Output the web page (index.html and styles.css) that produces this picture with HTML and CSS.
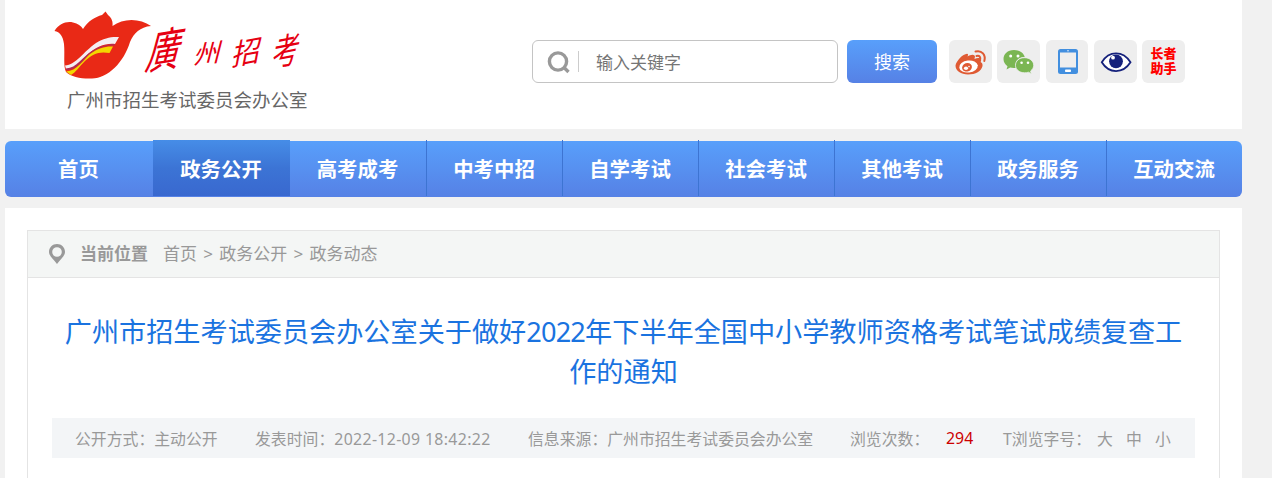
FILE: index.html
```html
<!DOCTYPE html>
<html lang="zh-CN">

<head>
  <meta charset="UTF-8">
  <meta name="viewport" content="width=device-width, initial-scale=1.0">
  <title>广州市招生考试委员会办公室</title>
  <link rel="stylesheet" href="styles.css">
</head>

<body>
  <div class="wrap">
    <div class="header">
      <a class="logo">
        <svg width="270" height="84" viewBox="50 0 270 84">
          <path fill="#e92916" d="M54.500 31C59 24 66 21 73 22.500C78 23.500 81 26 83 29C88 21 95 17 102 15L105.500 11.500L108 15C112 18 113 22 112.500 26C123 18 140 18 151 26C140 27 134 33 130 42C124 62 108 78.500 92 78.500C82 79 71 77 66 72C63 66 65 55 64 44C63 36 60 32 54.500 31Z" />
          <path fill="#f4eef2" d="M65 65.500C76 65 83 52 96 43C104 38 111 36.500 119 37L115 44C105 43 96 47 88 54C81 62 75 69 66 69Z" />
          <path fill="#b52a50" d="M66 68.500C77 68 82 57 92 51C100 46 107 44 115 44L114.500 45.500C104 45 96 49 89 55C81 63 75 71 66 70Z" />
          <path fill="#f3d600" d="M66 71.500C77 71 83 60 90 54C98 48 106 46 113 46.500L109.500 53C99 51 92 54 85 61C79 67 76 72 71 75Z" />
          <g class="logo-name">
            <text font-size="42" transform="translate(144 70) skewX(-24) rotate(-10) scale(.76 1.16)">廣</text>
            <text font-size="27" transform="translate(193 64) skewX(-20) rotate(-6) scale(.96 .96)">州</text>
            <text font-size="31" transform="translate(231 66) skewX(-22) rotate(-12) scale(.86 1)">招</text>
            <text font-size="32" transform="translate(271 67) skewX(-20) rotate(-12) scale(.8 1.18)">考</text>
          </g>
        </svg>
        <span class="logo-text">广州市招生考试委员会办公室</span>
      </a>
      <div class="tools">
        <div class="search">
          <svg width="24" height="24" viewBox="0 0 24 24" fill="none" stroke="#999" stroke-width="3.400">
            <circle cx="11" cy="11.500" r="8.600" />
            <path d="M16.500 17L21.500 22" />
          </svg>
          <i class="line"></i>
          <span>输入关键字</span>
        </div>
        <a class="btn">搜索</a>
        <div class="icons">
          <a>
            <!-- 微博 -->
            <svg width="42" height="43" viewBox="0 0 42 43">
              <path fill="#df5a33" d="M18.500 16.500C21 15 24 14 25.500 15.500C26.500 16.500 25.500 18 25.500 19C28 18 31 17.500 32 19.300C32.600 20.500 31.500 21.500 31.800 22.300C33 23 33.800 24 33.500 26C32.500 31 26.500 34.500 19 34.500C12 34.500 6.500 31 6.500 25.800C7 21 14 14 18 13.800C19.500 13.800 19.200 15.500 18.500 16.500Z" />
              <ellipse cx="19.500" cy="26.500" rx="9.300" ry="6" fill="#fff" transform="rotate(-7 19.500 26.500)" />
              <ellipse cx="18" cy="27.300" rx="5" ry="4.200" fill="#df5a33" transform="rotate(-20 18 27.300)" />
              <ellipse cx="17" cy="28.300" rx="2.100" ry="1.700" fill="#fff" />
              <circle cx="20" cy="26.600" r=".8" fill="#fff" />
              <path fill="none" stroke="#df5a33" stroke-width="2" stroke-linecap="round" d="M26.500 11.500C33 9.800 37 15 35.300 21M27.500 16C30.500 15 32 17.300 31 20" />
            </svg>
          </a>
          <a>
            <!-- 微信 -->
            <svg width="43" height="43" viewBox="0 0 43 43">
              <path fill="#7bb653" d="M17 10C10.500 10 6.500 14 6.500 19C6.500 22 8 24.500 10.500 26.200L9.500 29.500L13.200 27.500C15 28 17 28.200 19 27.800C17 21 22 17 27.700 17C27 13 22.500 10 17 10Z" />
              <path fill="#7bb653" stroke="#eee" stroke-width=".8" d="M27.500 17.700C22 17.700 18.500 21 18.500 25.300C18.500 29.600 22.500 32.800 27.500 32.800C29 32.800 30.300 32.500 31.500 32.200L34.300 33.700L33.600 31C35.500 29.600 36.700 27.500 36.700 25.300C36.700 21 32.500 17.700 27.500 17.700Z" />
              <g fill="#fff">
                <circle cx="13.700" cy="16" r="1.500" />
                <circle cx="21" cy="16" r="1.500" />
                <circle cx="24.600" cy="22.800" r="1.300" />
                <circle cx="31" cy="22.800" r="1.300" />
              </g>
            </svg>
          </a>
          <a>
            <svg width="43" height="43" viewBox="0 0 43 43">
              <rect x="12" y="9" width="20" height="25" rx="2.500" fill="#428fdf" />
              <rect x="14" y="12.500" width="16" height="15" fill="#eee" />
              <rect x="19" y="29.500" width="6" height="2.500" rx=".8" fill="#fff" />
              <circle cx="22" cy="10.700" r=".7" fill="#fff" />
            </svg>
          </a>
          <a>
            <svg width="43" height="43" viewBox="0 0 43 43">
              <path fill="#fff" stroke="#15217c" stroke-width="1.800" d="M7.800 22.300C15 10.500 29 10.500 36.500 22.300C29 34 15 34 7.800 22.300Z" />
              <circle cx="22" cy="21.300" r="6.900" fill="#15217c" />
              <circle cx="19" cy="17.700" r="1.900" fill="#fff" />
            </svg>
          </a>
          <a class="elder">长者<br>助手</a>
        </div>
      </div>
    </div>

    <div class="nav">
      <a>首页</a>
      <a class="active">政务公开</a>
      <a>高考成考</a>
      <a>中考中招</a>
      <a>自学考试</a>
      <a>社会考试</a>
      <a>其他考试</a>
      <a>政务服务</a>
      <a>互动交流</a>
    </div>

    <div class="main">
      <div class="content">
        <div class="position">
          <svg width="16" height="20" viewBox="0 0 16 20">
            <path fill="#999" fill-rule="evenodd" d="M8 0C3.500 0 0 3.500 0 7.800C0 12 4 14.500 8 20C12 14.500 16 12 16 7.800C16 3.500 12.500 0 8 0ZM8 3.200A4.800 4.800 0 1 1 8 12.800A4.800 4.800 0 1 1 8 3.200Z" />
          </svg>
          <b>当前位置</b>
          <a>首页</a><i>&gt;</i><a>政务公开</a><i>&gt;</i><a>政务动态</a>
        </div>
        <h1 class="title">广州市招生考试委员会办公室关于做好<span>2022</span>年下半年全国中小学教师资格考试笔试成绩复查工<br>作的通知</h1>
        <div class="info">
          <span class="way">公开方式：主动公开</span>
          <span class="time">发表时间：<em>2022-12-09 18:42:22</em></span>
          <span class="from">信息来源：广州市招生考试委员会办公室</span>
          <span class="count">浏览次数：</span>
          <span class="num">294</span>
          <span class="size">T浏览字号：</span>
          <a>大</a>
          <a>中</a>
          <a>小</a>
        </div>
      </div>
    </div>
  </div>
</body>

</html>
```

FILE: styles.css
```css
* {
  margin: 0;
  padding: 0;
  box-sizing: border-box;
}

body {
  background: #f1f1f1;
  font-family: "Noto Sans", "Noto Sans CJK SC", sans-serif;
  font-size: 17px;
  color: #999;
}

i,
em {
  font-style: normal;
}

svg {
  display: block;
}

.wrap {
  width: 1237px;
  margin-left: 5px;
}

.header {
  height: 129px;
  background: #fff;
  display: flex;
  justify-content: space-between;
  padding: 0 57px 0 45px;
}

.logo-name {
  fill: #e60012;
  font-family: "Noto Sans CJK SC", sans-serif;
}

.logo-text {
  display: block;
  padding-left: 17px;
  font-size: 18.500px;
  line-height: 32px;
  color: #666;
  white-space: nowrap;
}

.tools {
  display: flex;
  padding-top: 40px;
}

.search {
  width: 306px;
  height: 43px;
  border: 1px solid #c4c4c4;
  border-radius: 6px;
  display: flex;
  align-items: center;
  padding-left: 14px;
  color: #757575;
}

.search .line {
  width: 1px;
  height: 21px;
  margin: 0 17px 0 7px;
  background: #ccc;
}

.btn {
  width: 90px;
  height: 43px;
  margin: 0 12px 0 9px;
  border-radius: 6px;
  background: linear-gradient(#589ffb, #5681e5);
  color: #fff;
  font-size: 18px;
  line-height: 45px;
  text-align: center;
}

.icons {
  display: flex;
  gap: 5.500px;
}

.icons a {
  width: 42.800px;
  height: 43px;
  border-radius: 6px;
  background: #eee;
}

.icons .elder {
  padding-top: 6px;
  color: #f00;
  font-size: 13px;
  font-weight: 900;
  line-height: 15px;
  text-align: center;
}

.nav {
  height: 56px;
  margin-top: 12px;
  border-radius: 6px;
  background: linear-gradient(#589ffb, #5681e5);
  display: flex;
}

.nav a {
  width: 136px;
  height: 56px;
  margin-top: -1px;
  padding-right: 1px;
  border-left: 1px solid #3d74d2;
  color: #fff;
  font-size: 20.400px;
  font-weight: bold;
  line-height: 58px;
  text-align: center;
}

.nav a:first-child {
  width: 148px;
  border-left: 0;
}

.nav .active {
  width: 137px;
  border-left: 0;
  background: linear-gradient(#468de7, #3c74d5 50%, #3968cf);
}

.nav .active + a {
  border-left: 0;
}

.main {
  height: 270px;
  margin-top: 11px;
  padding: 22px 22px 0;
  background: #fff;
}

.content {
  height: 248px;
  border: 1px solid #e4e4e4;
  border-bottom: 0;
}

.position {
  height: 47px;
  padding-left: 21px;
  border-bottom: 1px solid #e4e4e4;
  background: #f4f6f5;
  display: flex;
  align-items: center;
  line-height: 20px;
}

.position b {
  margin: 0 15px;
}

.position b,
.position a,
.position i {
  padding-bottom: 1px;
}

.position i {
  width: 22.300px;
  text-align: center;
}

.title {
  margin-top: 34px;
  color: #1a73e0;
  font-size: 27.150px;
  font-weight: normal;
  line-height: 40px;
  text-align: center;
  white-space: nowrap;
}

.title span {
  letter-spacing: -.8px;
}

.info {
  height: 40px;
  margin: 26px 24px 0;
  padding-left: 23px;
  background: #f3f5f7;
  display: flex;
  align-items: center;
  font-size: 15.850px;
  white-space: nowrap;
}

.info .way {
  width: 180px;
}

.info .time {
  width: 273px;
}

.info em {
  letter-spacing: .35px;
}

.info .from {
  width: 322px;
}

.info .count {
  width: 96px;
}

.info .num {
  width: 57px;
  color: #c00;
}

.info .size {
  width: 94px;
}

.info a {
  width: 29px;
}
```
